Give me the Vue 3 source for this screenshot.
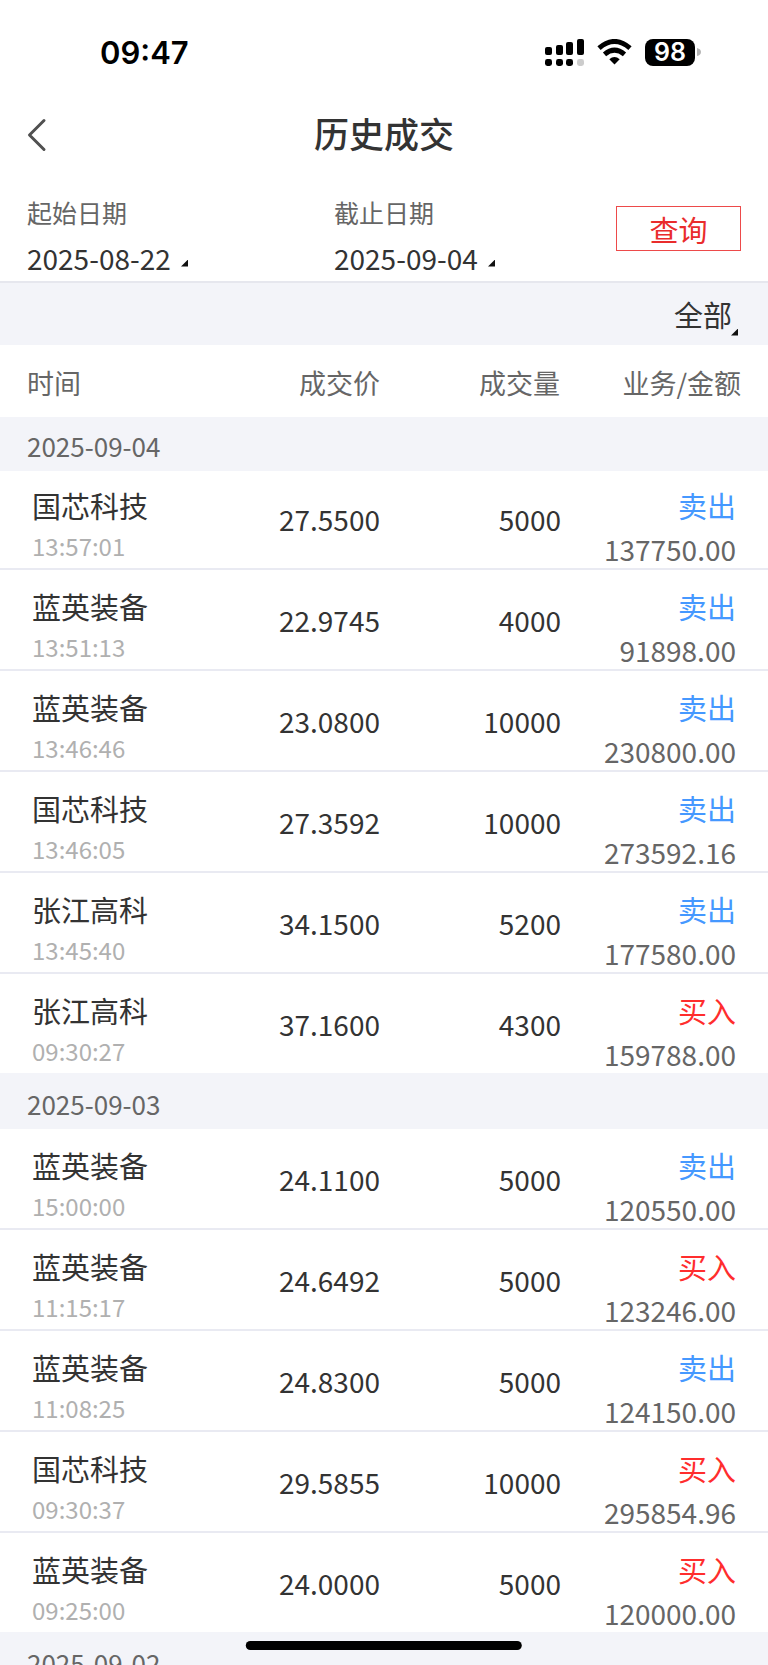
<script setup>
import { ref } from 'vue'

const startDate = ref('2025-08-22')
const endDate = ref('2025-09-04')
const kind = ref('全部')

const groups = [
  {
    date: '2025-09-04',
    deals: [
      { name: '国芯科技', time: '13:57:01', price: '27.5500', volume: '5000', side: '卖出', amount: '137750.00' },
      { name: '蓝英装备', time: '13:51:13', price: '22.9745', volume: '4000', side: '卖出', amount: '91898.00' },
      { name: '蓝英装备', time: '13:46:46', price: '23.0800', volume: '10000', side: '卖出', amount: '230800.00' },
      { name: '国芯科技', time: '13:46:05', price: '27.3592', volume: '10000', side: '卖出', amount: '273592.16' },
      { name: '张江高科', time: '13:45:40', price: '34.1500', volume: '5200', side: '卖出', amount: '177580.00' },
      { name: '张江高科', time: '09:30:27', price: '37.1600', volume: '4300', side: '买入', amount: '159788.00' },
    ],
  },
  {
    date: '2025-09-03',
    deals: [
      { name: '蓝英装备', time: '15:00:00', price: '24.1100', volume: '5000', side: '卖出', amount: '120550.00' },
      { name: '蓝英装备', time: '11:15:17', price: '24.6492', volume: '5000', side: '买入', amount: '123246.00' },
      { name: '蓝英装备', time: '11:08:25', price: '24.8300', volume: '5000', side: '卖出', amount: '124150.00' },
      { name: '国芯科技', time: '09:30:37', price: '29.5855', volume: '10000', side: '买入', amount: '295854.96' },
      { name: '蓝英装备', time: '09:25:00', price: '24.0000', volume: '5000', side: '买入', amount: '120000.00' },
    ],
  },
  { date: '2025-09-02', deals: [] },
]
</script>

<template>
  <div class="page">
    <div class="status">
      <span class="clock">09:47</span>
      <div class="indicators">
        <svg class="signal" width="39" height="27" viewBox="0 0 39 27" aria-hidden="true">
          <rect x="0" y="8" width="7" height="8" rx="2" />
          <rect x="11" y="6" width="7" height="10" rx="2" />
          <rect x="21" y="3" width="7" height="13" rx="2" />
          <rect x="32" y="0" width="7" height="16" rx="2" />
          <rect x="0" y="20" width="7" height="7" rx="2.4" />
          <rect x="11" y="20" width="7" height="7" rx="2.4" />
          <rect x="21" y="20" width="7" height="7" rx="2.4" />
          <rect x="32" y="20" width="7" height="7" rx="2.4" fill="#cccccc" />
        </svg>
        <svg class="wifi" width="35" height="27" viewBox="0 0 35 27" aria-hidden="true">
          <path d="M2 9.200Q17.500-4.200 33 9.200" fill="none" stroke="#000" stroke-width="5" />
          <path d="M7.500 15.300Q17.500 7 27.500 15.300" fill="none" stroke="#000" stroke-width="5" />
          <path d="M12.300 20.200Q17.500 15.800 22.700 20.200L17.500 25.500Z" />
        </svg>
        <div class="battery">
          <span class="level">98</span>
          <svg width="4" height="8" viewBox="0 0 4 8" aria-hidden="true"><path d="M0 0Q4 1 4 4T0 8Z" fill="#b5b5b5" /></svg>
        </div>
      </div>
    </div>

    <header class="nav">
      <button class="back" type="button" aria-label="返回">
        <svg width="20" height="34" viewBox="0 0 20 34" aria-hidden="true">
          <path d="M17 2.500L2.500 17L17 31.500" fill="none" stroke="#505050" stroke-width="3" stroke-linecap="round" stroke-linejoin="round" />
        </svg>
      </button>
      <h1>历史成交</h1>
    </header>

    <form class="filter" @submit.prevent>
      <div class="field">
        <label for="start">起始日期</label>
        <div class="picker">
          <input id="start" v-model="startDate" type="text" readonly />
          <i class="corner"></i>
        </div>
      </div>
      <div class="field">
        <label for="end">截止日期</label>
        <div class="picker">
          <input id="end" v-model="endDate" type="text" readonly />
          <i class="corner"></i>
        </div>
      </div>
      <button class="query" type="submit">查询</button>
    </form>

    <div class="kind">
      <select v-model="kind" aria-label="业务类型">
        <option>全部</option>
        <option>买入</option>
        <option>卖出</option>
      </select>
      <i class="corner"></i>
    </div>

    <table class="deals">
      <thead>
        <tr>
          <th class="c-name" scope="col">时间</th>
          <th class="c-price" scope="col">成交价</th>
          <th class="c-volume" scope="col">成交量</th>
          <th class="c-amount" scope="col">业务/金额</th>
        </tr>
      </thead>
      <tbody v-for="group in groups" :key="group.date">
        <tr class="day">
          <th colspan="4" scope="rowgroup">{{ group.date }}</th>
        </tr>
        <tr v-for="deal in group.deals" :key="deal.time" class="deal">
          <td class="stock">
            <div class="name">{{ deal.name }}</div>
            <div class="time">{{ deal.time }}</div>
          </td>
          <td class="number">{{ deal.price }}</td>
          <td class="number">{{ deal.volume }}</td>
          <td class="total">
            <div class="side" :class="deal.side === '买入' ? 'buy' : 'sell'">{{ deal.side }}</div>
            <div class="amount">{{ deal.amount }}</div>
          </td>
        </tr>
      </tbody>
    </table>

    <div class="home-bar"></div>
  </div>
</template>

<style>
body {
  margin: 0;
  background: #fff;
}
</style>

<style scoped>
.page {
  height: 100vh;
  overflow: hidden;
  background: #fff;
  color: #333;
  font-family: "Noto Sans CJK SC", sans-serif;
}
button,
input,
select {
  margin: 0;
  padding: 0;
  border: 0;
  border-radius: 0;
  background: none;
  color: inherit;
  font-family: inherit;
  appearance: none;
}

.status {
  display: flex;
  justify-content: space-between;
  align-items: center;
  height: 104px;
  padding: 0 67px 0 100px;
  color: #000;
  font-family: Inter, sans-serif;
}
.clock {
  font-size: 31px;
  font-weight: 600;
}
.indicators {
  display: flex;
  align-items: center;
}
.wifi {
  margin: 0 13px 0 13px;
}
.battery {
  display: flex;
  align-items: center;
  gap: 2px;
}
.level {
  width: 50px;
  border-radius: 8px;
  background: #000;
  color: #fff;
  font-size: 25px;
  font-weight: 600;
  line-height: 27px;
  text-align: center;
}

.nav {
  display: grid;
  grid-template-columns: 100px 1fr 100px;
  align-items: center;
  height: 62px;
}
.back {
  display: flex;
  padding-left: 27px;
}
h1 {
  margin: 0;
  padding-bottom: 4px;
  font-size: 35px;
  font-weight: 500;
  line-height: 50px;
  text-align: center;
}

.filter {
  display: grid;
  grid-template-columns: 280px 1fr 125px;
  column-gap: 27px;
  align-items: start;
  box-sizing: border-box;
  height: 117px;
  padding: 28px 27px 0;
  border-bottom: 2px solid #e6e7ee;
}
.field label {
  display: block;
  color: #666;
  font-size: 25px;
  line-height: 36px;
}
.picker {
  display: flex;
  align-items: center;
  margin-top: 8px;
}
.picker input {
  width: 148px;
  height: 40px;
  font-size: 28px;
  line-height: 40px;
}
.corner {
  width: 7px;
  height: 7px;
  background: #111;
  clip-path: polygon(100% 0, 100% 100%, 0 100%);
}
.picker .corner {
  margin: 10px 0 0 6px;
}
.query {
  height: 45px;
  margin-top: 12px;
  border: 1px solid #ed4a4a;
  color: #e92c2c;
  font-size: 29px;
  line-height: 42px;
}

.kind {
  display: flex;
  justify-content: flex-end;
  align-items: center;
  height: 62px;
  padding-right: 30px;
  background: #f3f4f9;
}
.kind select {
  font-size: 29px;
  line-height: 42px;
}
.kind .corner {
  margin: 36px 0 0 -2px;
}

.deals {
  width: 100%;
  border-spacing: 0;
  table-layout: fixed;
}
th {
  padding: 0;
  color: #666;
  font-weight: 400;
  text-align: right;
}
td {
  padding: 0;
}
thead th {
  box-sizing: border-box;
  height: 72px;
  padding-top: 3px;
  font-size: 27px;
  line-height: 40px;
}
.c-name {
  width: 25%;
  padding-left: 27px;
  text-align: left;
}
.c-price {
  width: 188px;
}
.c-volume {
  width: 181px;
  padding-right: 1px;
}
.c-amount {
  padding-right: 27px;
}
.day th {
  box-sizing: border-box;
  height: 54px;
  padding: 4px 0 0 27px;
  background: #f3f4f9;
  font-size: 26px;
  line-height: 40px;
  text-align: left;
}
.deal td {
  box-sizing: border-box;
  height: 101px;
  padding-top: 16px;
  border-bottom: 2px solid #e9eaf2;
  vertical-align: top;
}
.deal:last-child td {
  border-bottom-color: #f3f4f9;
}
tbody:first-of-type .deal:nth-child(2) td {
  height: 99px;
  padding-top: 14px;
}
.deal .stock {
  padding-left: 32px;
}
.name,
.side {
  font-size: 29px;
  line-height: 40px;
}
.time {
  margin-top: 1px;
  color: #b0b0b0;
  font-size: 24px;
  line-height: 40px;
}
.deal .number {
  font-size: 28px;
  line-height: 68px;
  text-align: right;
}
.deal .total {
  padding-right: 32px;
  text-align: right;
}
.amount {
  margin-top: 5px;
  color: #666;
  font-size: 28px;
  line-height: 38px;
}
.sell {
  color: #4598ff;
}
.buy {
  color: #ff2d2d;
}

.home-bar {
  position: fixed;
  bottom: 15px;
  left: 50%;
  width: 36%;
  height: 9px;
  border-radius: 5px;
  background: #000;
  transform: translateX(-50%);
}
</style>
